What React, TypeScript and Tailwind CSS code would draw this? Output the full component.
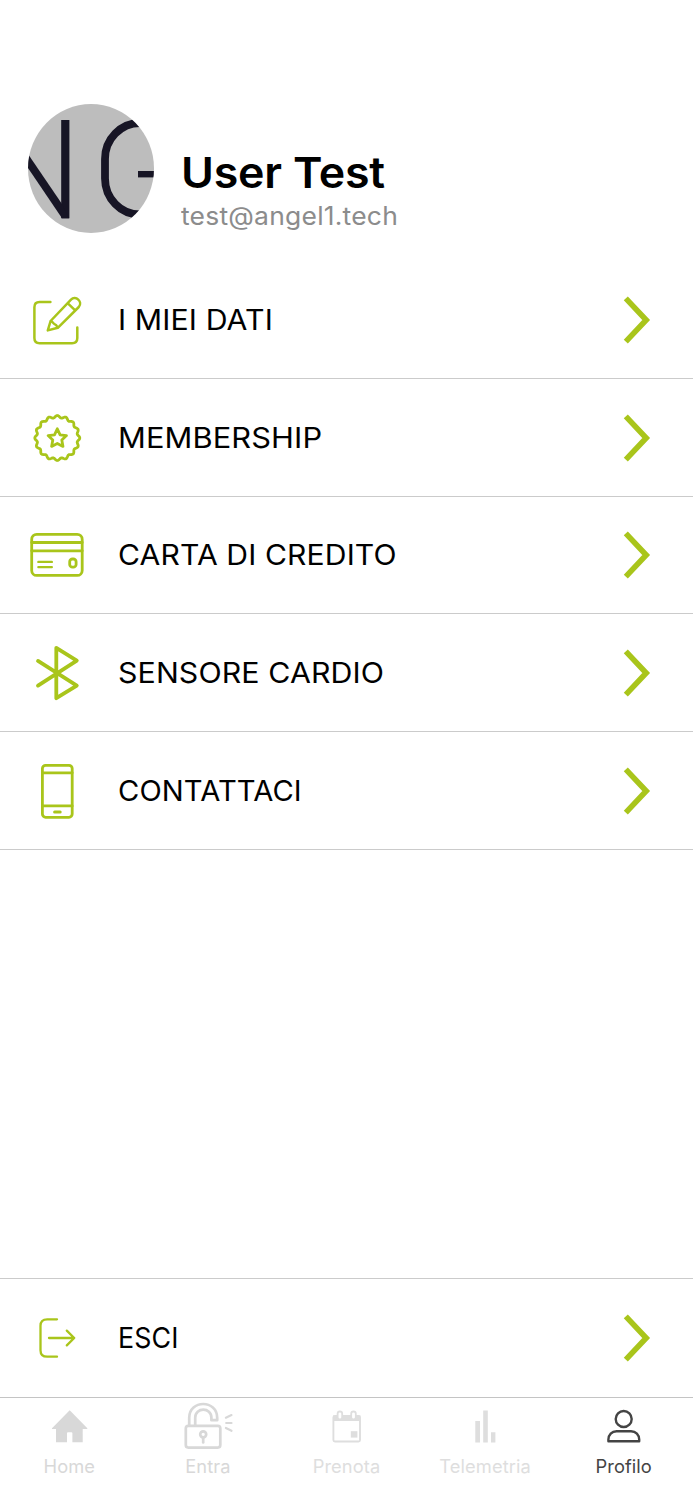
import type { ReactNode } from "react";

const GREEN = "#a9c51b";

// Scalloped edge of the membership badge, 16 bumps around the circle
const badgeEdge = Array.from({ length: 193 }, (_, i) => {
  const a = (i / 192) * Math.PI * 2;
  const r = 21.4 + 1.1 * Math.cos(16 * a);
  return `${(30.3 + r * Math.sin(a)).toFixed(2)},${(30 - r * Math.cos(a)).toFixed(2)}`;
}).join(" ");

function RowIcon({ children, width = 2.8 }: { children: ReactNode; width?: number }) {
  return (
    <svg
      className="h-[60px] w-[60px] shrink-0"
      viewBox="0 0 60 60"
      fill="none"
      stroke={GREEN}
      strokeWidth={width}
      strokeLinecap="round"
      strokeLinejoin="round"
    >
      {children}
    </svg>
  );
}

const EditIcon = () => (
  <RowIcon width={2.5}>
    <path d="M23.4 12H12.6Q7.4 12 7.4 17.2V48.1Q7.4 53.3 12.6 53.3H45.1Q50.3 53.3 50.3 48.1V37.4" />
    <path d="M23.6 31L44 9.6C48.6 5 56.2 11.8 51.8 17L30.8 37.8L20.8 40.4ZM40.6 13.2L48.2 20.4M23.6 31C26.2 31.4 25.6 33.6 27.8 34.2C29.4 34.4 30 36 30.8 37.8" />
  </RowIcon>
);

const BadgeIcon = () => (
  <RowIcon>
    <polygon points={badgeEdge} />
    <path d="M30.3 20.8L33.1 26.8L39.5 27.6L34.8 32L36 38.4L30.3 35.4L24.6 38.4L25.8 32L21.1 27.6L27.5 26.8Z" />
  </RowIcon>
);

const CardIcon = () => (
  <RowIcon>
    <rect x="4.7" y="9.4" width="50.5" height="41" rx="5" />
    <path d="M4.7 17.5H55.2M4.7 25.8H55.2" />
    <path d="M11.4 36.9H24.8M11.4 42.1H24.8" strokeWidth="2.4" />
    <rect x="42.7" y="34" width="6.4" height="8.2" rx="2.8" />
  </RowIcon>
);

const BluetoothIcon = () => (
  <RowIcon width={3.8}>
    <path d="M11 17.9L49.8 42.6L29.3 55.2V4.8L49.8 17.6L11 42.6" />
  </RowIcon>
);

const PhoneIcon = () => (
  <RowIcon>
    <rect x="15.4" y="4.3" width="29.8" height="52" rx="3.2" />
    <path d="M15.4 11.8H45.2M15.4 44.9H45.2" />
    <path d="M27.6 50.9H33.2" strokeWidth="3" />
  </RowIcon>
);

const ExitIcon = () => (
  <RowIcon width={2.3}>
    <path d="M30 11.3H20.2Q13.5 11.3 13.5 17.8V42.2Q13.5 48.7 20.2 48.7H30" />
    <path d="M22 30H47.2M39.8 22.6L47.2 30L39.8 37.4" />
  </RowIcon>
);

const menu = [
  { label: "I MIEI DATI", icon: <EditIcon />, text: "scale-x-[1.062]" },
  { label: "MEMBERSHIP", icon: <BadgeIcon />, text: "scale-x-[1.08]" },
  { label: "CARTA DI CREDITO", icon: <CardIcon />, text: "scale-x-[1.057]" },
  { label: "SENSORE CARDIO", icon: <BluetoothIcon />, text: "scale-x-[1.064]" },
  { label: "CONTATTACI", icon: <PhoneIcon />, text: "scale-x-[1.022]" },
];

function MenuRow({ label, icon, text, className }: { label: string; icon: ReactNode; text: string; className: string }) {
  return (
    <button className={`flex w-full items-center border-[#cbcbcb] pl-[27px] pr-[23px] text-left ${className}`}>
      {icon}
      <span className="ml-[30.5px] flex-1 pt-[2px]">
        <span className={`inline-block origin-left whitespace-nowrap text-[28.5px] leading-none tracking-[0.1px] text-black ${text}`}>
          {label}
        </span>
      </span>
      <svg className="h-[60px] w-[60px]" viewBox="0 0 60 60" fill="none" stroke={GREEN} strokeWidth="5.6">
        <path d="M15.8 8.4L36.2 30L15.8 51.6" />
      </svg>
    </button>
  );
}

function Avatar() {
  return (
    <div className="h-[129px] w-[126px] overflow-hidden rounded-[50%] bg-[#bdbdbd]">
      <svg className="h-full w-full" viewBox="0 0 126 129">
        <rect x="33.2" y="16" width="8.2" height="98.3" fill="#171525" />
        <polygon points="-4,44 34,100 41,114.3 34,114.3 -4,58" fill="#171525" />
        <rect x="77" y="19" width="84" height="91.5" rx="35" ry="36" fill="none" stroke="#171525" strokeWidth="7.8" />
        <rect x="110" y="67" width="20" height="6.4" fill="#171525" />
      </svg>
    </div>
  );
}

function TabIcon({ children }: { children: ReactNode }) {
  return (
    <svg className="h-[50px] w-[60px]" viewBox="0 0 60 50" fill="none" strokeLinecap="round" strokeLinejoin="round">
      {children}
    </svg>
  );
}

const tabs = [
  {
    label: "Home",
    color: "text-[#d8d8d8]",
    icon: (
      <TabIcon>
        <path d="M30.7 10.3L48.3 28.2V29H43.7V42.3H33.4V33.3Q33.4 32.3 32.4 32.3H29Q28 32.3 28 33.3V42.3H17V29H13V28.2Z" fill="currentColor" />
      </TabIcon>
    ),
  },
  {
    label: "Entra",
    color: "text-[#d8d8d8]",
    icon: (
      <TabIcon>
        <g stroke="currentColor" strokeWidth="2.7">
          <rect x="7.8" y="25.8" width="34.5" height="21.8" rx="2.5" />
          <path d="M11.2 25.5V17.8C11.2 -0.6 39.2 -0.6 39.2 17.8V20.2H33.4V17.8C33.4 7 17.2 7 17.2 17.8V25.5" />
          <circle cx="25.2" cy="34.3" r="3" />
          <path d="M25.2 37.5V42.5" />
          <path d="M47.9 17.7L53.5 15.1M48.2 23H53.5M47.9 27.9L53.5 30.8" strokeWidth="2.2" />
        </g>
      </TabIcon>
    ),
  },
  {
    label: "Prenota",
    color: "text-[#dedede]",
    icon: (
      <TabIcon>
        <rect x="17.4" y="16" width="26.6" height="25.5" rx="1.5" stroke="currentColor" strokeWidth="1.9" />
        <path d="M17 15.5H44.4V21H17Z" fill="currentColor" />
        <rect x="21.6" y="11.5" width="4.6" height="8" rx="2.3" fill="white" stroke="currentColor" strokeWidth="1.8" />
        <rect x="35.2" y="11.5" width="4.6" height="8" rx="2.3" fill="white" stroke="currentColor" strokeWidth="1.8" />
        <rect x="34.8" y="31.2" width="6.6" height="6.4" fill="currentColor" />
      </TabIcon>
    ),
  },
  {
    label: "Telemetria",
    color: "text-[#dedede]",
    icon: (
      <TabIcon>
        <path d="M20.3 21H25V42.4H20.3ZM28.2 10.4H32.8V42.4H28.2ZM36 32.3H40.4V42.4H36Z" fill="currentColor" />
      </TabIcon>
    ),
  },
  {
    label: "Profilo",
    color: "text-[#444444]",
    icon: (
      <TabIcon>
        <g stroke="currentColor" strokeWidth="2.4">
          <circle cx="29.7" cy="19" r="8" />
          <path d="M14.4 41.2V39.6C14.4 34.8 17.8 31.3 22.6 31.3H37C41.8 31.3 45.2 34.8 45.2 39.6V41.2Z" />
        </g>
      </TabIcon>
    ),
  },
];

export default function App() {
  return (
    <div className="flex h-[1500px] w-[693px] flex-col overflow-hidden bg-white font-['Inter',sans-serif]">
      {/* Profile header */}
      <header className="flex h-[261.4px] shrink-0 pl-[28px] pt-[104px]">
        <Avatar />
        <div className="ml-[27px] pt-[43px]">
          <h1 className="origin-left scale-x-[1.04] whitespace-nowrap text-[43px] font-semibold leading-[50px] tracking-[-0.2px] text-black">
            User Test
          </h1>
          <p className="mt-[1px] origin-left scale-x-[1.059] whitespace-nowrap text-[25px] leading-[36px] tracking-[0.2px] text-[#8c8c8c]">
            test@angel1.tech
          </p>
        </div>
      </header>

      <nav>
        {menu.map((item) => (
          <MenuRow key={item.label} {...item} className="h-[117.65px] border-b pt-[1px]" />
        ))}
      </nav>

      {/* Logout stays just above the tab bar */}
      <div className="mt-auto">
        <MenuRow label="ESCI" icon={<ExitIcon />} text="scale-x-[0.94]" className="h-[119px] border-t" />
      </div>

      <footer className="grid h-[103px] shrink-0 grid-cols-5 border-t border-[#c4c4c4]">
        {tabs.map((tab) => (
          <button key={tab.label} className={`flex flex-col items-center pt-[2px] ${tab.color}`}>
            {tab.icon}
            <span className="mt-[5px] text-[18.3px] leading-[22px] tracking-[0.1px]">{tab.label}</span>
          </button>
        ))}
      </footer>
    </div>
  );
}
